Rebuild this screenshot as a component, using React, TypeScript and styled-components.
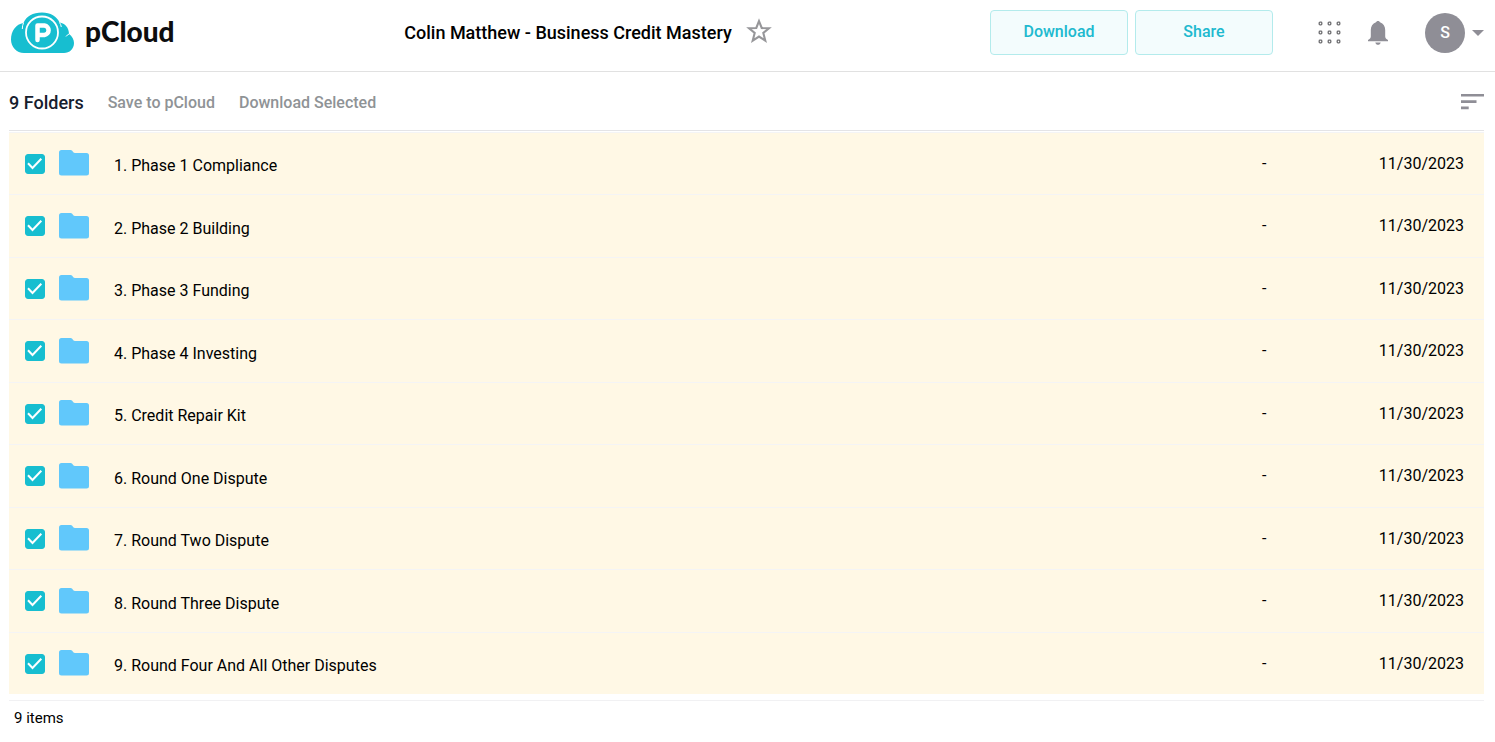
import React, { useState } from "react";
import styled, { createGlobalStyle } from "styled-components";

const GlobalStyle = createGlobalStyle`
  *, *::before, *::after { box-sizing: border-box; }
  body {
    margin: 0;
    background: #fff;
    color: #000;
    font-family: Roboto, "Liberation Sans", sans-serif;
    font-size: 16px;
    line-height: 20px;
  }
  button { font-family: inherit; cursor: pointer; }
`;

const Header = styled.header`
  display: flex;
  align-items: center;
  height: 72px;
  padding: 0 11px 6px;
  border-bottom: 1px solid #e1e1e1;
`;

const Logo = styled.a`
  display: flex;
  align-items: center;
  gap: 10px;
  width: 175px;
  color: #0d0d0f;
  text-decoration: none;
`;

const LogoText = styled.span`
  padding-bottom: 4px;
  font-family: Lato, sans-serif;
  font-size: 28px;
  font-weight: 900;
  line-height: 32px;
`;

const TitleGroup = styled.div`
  flex: 1;
  display: flex;
  align-items: center;
  justify-content: center;
  gap: 14px;
`;

const Title = styled.h1`
  margin: 0;
  font-size: 18px;
  font-weight: 500;
  line-height: 24px;
`;

const IconButton = styled.button`
  display: flex;
  padding: 0;
  border: 0;
  background: none;
  color: #8f8e96;
`;

const Star = styled(IconButton)`
  padding-bottom: 4px;
  color: #97979a;
`;

const Actions = styled.div`
  display: flex;
  gap: 7px;
`;

const ActionButton = styled.button`
  width: 138px;
  height: 45px;
  padding: 0 0 2px;
  border: 1px solid #b3ebec;
  border-radius: 4px;
  background: #f3fcfd;
  color: #20b9cf;
  font-size: 16px;
  font-weight: 500;
`;

const UserTools = styled.div`
  display: flex;
  align-items: center;
  margin-left: 45px;
`;

const Bell = styled(IconButton)`
  margin: 0 37px 0 27px;
`;

const Account = styled(IconButton)`
  align-items: center;
  gap: 7px;
`;

const Avatar = styled.span`
  width: 40px;
  border-radius: 50%;
  background: #8f8e96;
  color: #fff;
  font-size: 16px;
  font-weight: 500;
  line-height: 40px;
  text-align: center;
`;

const Main = styled.main`
  margin: 0 11px 0 9px;
`;

const Toolbar = styled.div`
  display: flex;
  align-items: center;
  gap: 24px;
  height: 59px;
  padding-top: 4px;
  border-bottom: 1px solid #e4e4e6;
`;

const Count = styled.h2`
  margin: 0;
  color: #17202e;
  font-size: 18px;
  font-weight: 500;
  line-height: 24px;
`;

const TextButton = styled.button`
  padding: 0;
  border: 0;
  background: none;
  color: #8f9396;
  font-size: 16px;
  font-weight: 500;
  line-height: 20px;
`;

const Sort = styled(IconButton)`
  margin-left: auto;
`;

const FileTable = styled.table`
  width: 100%;
  margin-top: 1px;
  border-collapse: separate;
  border-spacing: 0;
  table-layout: fixed;
`;

const Row = styled.tr<{ $selected: boolean }>`
  height: 62px;
  background: ${(p) => (p.$selected ? "#fff8e5" : "#fff")};

  &:nth-child(even) { height: 63px; }
`;

const Cell = styled.td<{ $width?: number }>`
  width: ${(p) => (p.$width ? `${p.$width}px` : "auto")};
  padding: 0;
  border-top: 1px solid #f4f4f5;
  font-size: 16px;
`;

const NameCell = styled(Cell)`
  padding-top: 5px;
`;

const DateCell = styled(Cell)`
  padding-right: 20px;
  text-align: right;
`;

const CheckLabel = styled.label`
  display: grid;
  width: 20px;
  margin-left: 16px;
  color: #fff;

  > * { grid-area: 1 / 1; }
  svg { pointer-events: none; }
`;

const Check = styled.input`
  appearance: none;
  width: 20px;
  height: 20px;
  margin: 0;
  border: 1px solid #17bed0;
  border-radius: 3px;
  background: #fff;

  &:checked { background: #17bed0; }
`;

const FolderSvg = styled.svg`
  display: block;
`;

const Footer = styled.footer`
  margin-top: 6px;
  padding: 7px 5px;
  border-top: 1px solid #f1f1f3;
  font-size: 15px;
`;

const folders = [
  "1. Phase 1 Compliance",
  "2. Phase 2 Building",
  "3. Phase 3 Funding",
  "4. Phase 4 Investing",
  "5. Credit Repair Kit",
  "6. Round One Dispute",
  "7. Round Two Dispute",
  "8. Round Three Dispute",
  "9. Round Four And All Other Disputes",
];

const CloudLogo = () => (
  <svg width="64" height="42" viewBox="0 0 64 42" aria-hidden="true">
    <path
      fill="#17bed0"
      d="M13 41C5.500 41 0 35 0 27.500C0 19 5 12 12.500 11C15 4.500 22 .5 31 .5C39.500 .5 46 4.500 48.500 10.500C54 11 58 16 58 22C61 24 63 27.500 63 31C63 37 58.500 41 53 41Z"
    />
    <circle cx="31" cy="20.500" r="16" fill="none" stroke="#fff" strokeWidth="1.800" />
    <path fill="none" stroke="#fff" strokeWidth="1" d="M12.500 11Q11.300 13.500 11.300 17M48.500 10.500Q50 12.500 50.300 15M58 22Q56 23 55 24.500" />
    <path
      fill="none"
      stroke="#fff"
      strokeWidth="4.500"
      strokeLinecap="round"
      strokeLinejoin="round"
      d="M26.500 28V13.500H33.500A4.800 4.800 0 0 1 33.500 23H27"
    />
  </svg>
);

const StarIcon = () => (
  <svg width="26" height="26" viewBox="0 0 26 26" fill="none" stroke="currentColor" strokeWidth="2.100" aria-hidden="true">
    <path d="M13 3.200L15.700 10L23 10.300L17.300 14.900L19.300 22.700L13 18.600L6.700 22.700L8.700 14.900L3 10.300L10.300 10Z" />
  </svg>
);

const AppsIcon = () => (
  <svg width="23" height="23" viewBox="0 0 23 23" fill="none" stroke="#6d6d70" strokeWidth="1.300" aria-hidden="true">
    {[2.5, 11.5, 20.5].map((y) =>
      [2.5, 11.5, 20.5].map((x) => <rect key={`${x}-${y}`} x={x - 1.3} y={y - 1.3} width="2.600" height="2.600" rx=".8" />)
    )}
  </svg>
);

const BellIcon = () => (
  <svg width="20" height="24" viewBox="0 0 20 24" fill="currentColor" aria-hidden="true">
    <path d="M10 0C11 0 11.700.600 12 1.300C15.500 2.500 17.200 5.500 17.200 9V15.500C17.200 17 18.200 18 20 19V20.200H0V19C1.800 18 2.800 17 2.800 15.500V9C2.800 5.500 4.500 2.500 8 1.300C8.300.600 9 0 10 0ZM7.300 21.400H12.700C12.300 23 11.300 23.800 10 23.800S7.700 23 7.300 21.400Z" />
  </svg>
);

const CaretIcon = () => (
  <svg width="12" height="6" viewBox="0 0 12 6" fill="currentColor" aria-hidden="true">
    <path d="M0 0H12L6 6Z" />
  </svg>
);

const SortIcon = () => (
  <svg width="23" height="18" viewBox="0 0 23 18" fill="currentColor" aria-hidden="true">
    <path d="M0 0H23V2.600H0ZM0 6.300H15.500V8.900H0ZM0 12.600H7.700V15.200H0Z" />
  </svg>
);

const CheckIcon = () => (
  <svg width="20" height="20" viewBox="0 0 20 20" fill="none" stroke="currentColor" strokeWidth="2" aria-hidden="true">
    <path d="M3 9.300L7.500 14L16.300 4.800" />
  </svg>
);

const FolderIcon = () => (
  <FolderSvg width="30" height="27" viewBox="0 0 30 27" aria-hidden="true">
    <path
      fill="#61c8fb"
      d="M2.500 0H11.500Q12.500 0 13.200.800L14.300 2.200Q14.900 3 16 3H27.500Q30 3 30 5.500V23Q30 25.500 27.500 25.500H2.500Q0 25.500 0 23V2.500Q0 0 2.500 0Z"
    />
  </FolderSvg>
);

function FolderRow({ name }: { name: string }) {
  const [selected, setSelected] = useState(true);
  return (
    <Row $selected={selected}>
      <Cell $width={50}>
        <CheckLabel>
          <Check
            type="checkbox"
            aria-label={name}
            checked={selected}
            onChange={(e) => setSelected(e.target.checked)}
          />
          <CheckIcon />
        </CheckLabel>
      </Cell>
      <Cell $width={55}>
        <FolderIcon />
      </Cell>
      <NameCell>{name}</NameCell>
      <Cell $width={112}>-</Cell>
      <DateCell $width={110}>11/30/2023</DateCell>
    </Row>
  );
}

export default function App() {
  return (
    <>
      <GlobalStyle />
      <Header>
        <Logo href="#">
          <CloudLogo />
          <LogoText>pCloud</LogoText>
        </Logo>
        <TitleGroup>
          <Title>Colin Matthew - Business Credit Mastery</Title>
          <Star aria-label="Add to favourites">
            <StarIcon />
          </Star>
        </TitleGroup>
        <Actions>
          <ActionButton>Download</ActionButton>
          <ActionButton>Share</ActionButton>
        </Actions>
        <UserTools>
          <IconButton aria-label="Apps">
            <AppsIcon />
          </IconButton>
          <Bell aria-label="Notifications">
            <BellIcon />
          </Bell>
          <Account aria-label="Account">
            <Avatar>S</Avatar>
            <CaretIcon />
          </Account>
        </UserTools>
      </Header>
      <Main>
        <Toolbar>
          <Count>9 Folders</Count>
          <TextButton>Save to pCloud</TextButton>
          <TextButton>Download Selected</TextButton>
          <Sort aria-label="Sort">
            <SortIcon />
          </Sort>
        </Toolbar>
        <FileTable>
          <tbody>
            {folders.map((name) => (
              <FolderRow key={name} name={name} />
            ))}
          </tbody>
        </FileTable>
        <Footer>9 items</Footer>
      </Main>
    </>
  );
}
